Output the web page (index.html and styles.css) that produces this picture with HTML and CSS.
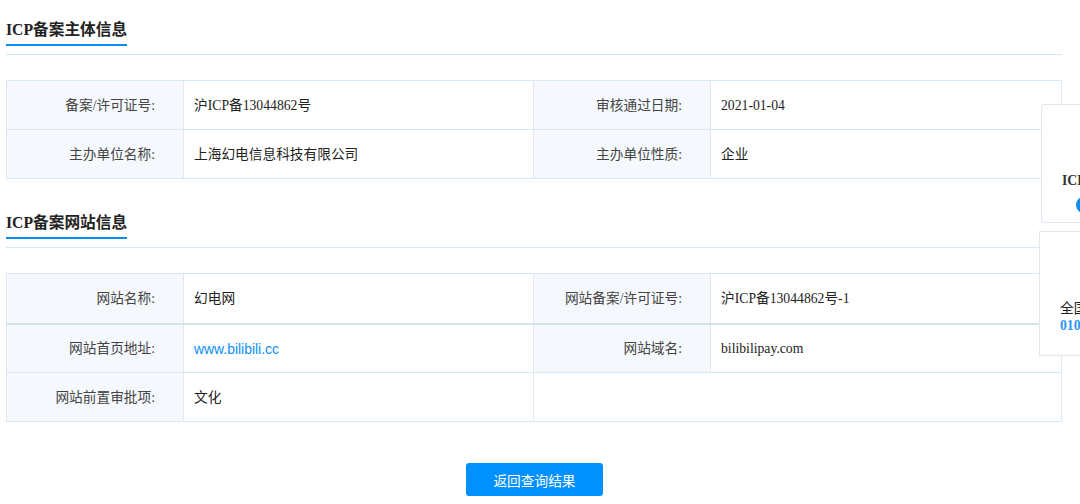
FILE: index.html
```html
<!DOCTYPE html>
<html lang="zh-CN">
<head>
<meta charset="utf-8">
<title>ICP备案详情</title>
<link rel="stylesheet" href="styles.css">
</head>
<body>
<main class="page">
  <section class="section">
    <div class="head"><h2 class="title">ICP备案主体信息</h2></div>
    <table class="info">
      <colgroup><col class="c-label"><col class="c-value"><col class="c-label"><col></colgroup>
      <tr><th>备案/许可证号:</th><td>沪ICP备13044862号</td><th>审核通过日期:</th><td>2021-01-04</td></tr>
      <tr><th>主办单位名称:</th><td>上海幻电信息科技有限公司</td><th>主办单位性质:</th><td>企业</td></tr>
    </table>
  </section>
  <section class="section">
    <div class="head"><h2 class="title">ICP备案网站信息</h2></div>
    <table class="info">
      <colgroup><col class="c-label"><col class="c-value"><col class="c-label"><col></colgroup>
      <tr class="thick"><th>网站名称:</th><td>幻电网</td><th>网站备案/许可证号:</th><td>沪ICP备13044862号-1</td></tr>
      <tr><th>网站首页地址:</th><td><a class="link" href="#">www.bilibili.cc</a></td><th>网站域名:</th><td>bilibilipay.com</td></tr>
      <tr><th>网站前置审批项:</th><td>文化</td><td colspan="2"></td></tr>
    </table>
  </section>
  <div class="actions"><button class="back" type="button">返回查询结果</button></div>
</main>
<aside class="float float-a">
  <p class="float-name">ICP备案</p>
  <span class="dot"></span>
</aside>
<aside class="float float-b">
  <p class="float-text">全国ICP</p>
  <p class="float-phone">010-66411166</p>
</aside>
</body>
</html>
```
FILE: styles.css
```css
* { box-sizing: border-box; }
html, body { margin: 0; height: 504px; overflow: hidden; background: #fff; }
body {
  position: relative;
  font-family: "Liberation Serif", "Noto Sans CJK SC", serif;
  font-size: 13.7px;
  color: #333;
}
.page { padding: 0 18px 0 6px; }
.section { height: 193px; }
.head {
  height: 55px;
  padding-top: 19px;
  border-bottom: 1px solid #d8e8f4;
}
.title {
  display: inline-block;
  margin: 0;
  height: 27px;
  line-height: 21px;
  font-size: 15.7px;
  font-weight: 700;
  color: #222;
  border-bottom: 2px solid #0a8df5;
}
.info {
  width: 100%;
  margin-top: 25px;
  table-layout: fixed;
  border-collapse: collapse;
  border: 1px solid #e3e8ec;
}
.c-label { width: 177px; }
.c-value { width: 350px; }
.info th, .info td {
  height: 49px;
  padding: 2px 0 0;
  line-height: 20px;
  border: 1px solid #d8e8f4;
  border-left-color: #e3e8ec;
  border-right-color: #e3e8ec;
  font-weight: 400;
}
.info th {
  padding-right: 28px;
  text-align: right;
  background: #f5f9fd;
  color: #444;
}
.info td { padding-left: 10px; color: #222; }
.thick th, .thick td { height: 50px; border-bottom: 2px solid #d3e3ef; }
.link {
  font-family: "Liberation Sans", sans-serif;
  font-size: 13.9px;
  color: #0a8df5;
  text-decoration: none;
}
.actions { margin-top: 77px; display: flex; justify-content: center; padding-left: 1px; }
.back {
  width: 137px;
  height: 33px;
  border: 0;
  border-radius: 3px;
  background: #0090ff;
  color: #fff;
  font: inherit;
}
.float {
  position: absolute;
  width: 120px;
  background: #fff;
  border: 1px solid #e2e6f0;
}
.float p { margin: 0; white-space: nowrap; }
.float-a { left: 1041px; top: 104px; height: 119px; border-radius: 3px; padding: 68px 0 0 20px; }
.float-b { left: 1039px; top: 231px; height: 125px; padding: 68px 0 0 20px; }
.float-name { font-weight: 700; line-height: 16px; }
.dot {
  display: block;
  width: 16px;
  height: 16px;
  margin: 8px 0 0 14px;
  border-radius: 50%;
  background: #0a8df5;
}
.float-text { line-height: 18px; color: #222; }
.float-phone { margin-top: 6px; line-height: 16px; font-weight: 700; color: #2a97f5; }
```
